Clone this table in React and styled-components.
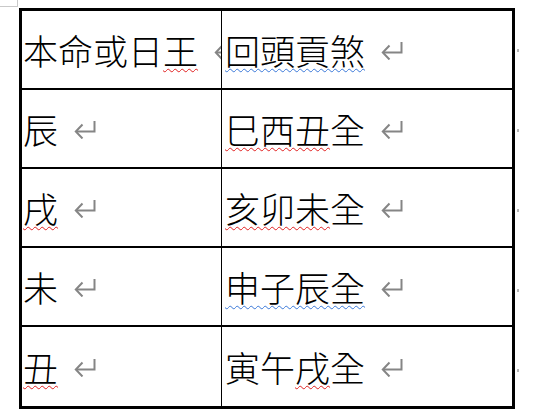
import styled, { createGlobalStyle } from 'styled-components';

const GlobalStyle = createGlobalStyle`
  html, body {
    margin: 0;
    padding: 0;
    background: #ffffff;
  }
  body {
    font-family: "Noto Sans CJK TC", "Noto Sans CJK SC", sans-serif;
  }
`

const rows = [
  { left: [['本命或日'], ['王', 'red']], right: [['回頭貢煞', 'blue']] },
  { left: [['辰']], right: [['巳西丑', 'red'], ['全']] },
  { left: [['戌', 'red']], right: [['亥卯未', 'red'], ['全']] },
  { left: [['未']], right: [['申子辰全', 'blue']] },
  { left: [['丑', 'red']], right: [['寅午'], ['戌', 'red'], ['全']] },
];

const ReturnMark = () => (
  <ArrowBox viewBox="0 0 22 19" width="22" height="19">
    <polyline points="20.5,1 20.5,11.5 2,11.5" fill="none" stroke="#858585" strokeWidth="2" />
    <polyline points="8.5,4.5 1.8,11.5 8.5,18.5" fill="none" stroke="#858585" strokeWidth="2" />
  </ArrowBox>
)

const Cell = ({ parts, side }) => (
  <CellBox $side={side}>
    <Text>
      {parts.map(([txt, tone], i) =>
        tone ? <Squiggle key={i} $tone={tone}>{txt}</Squiggle> : <span key={i}>{txt}</span>
      )}
    </Text>
    <ReturnMark />
  </CellBox>
)

const App = () => {
  return (
    <>
      <GlobalStyle />
      <Page>
        <CropMark />
        <TableRow>
          <Grid>
            {rows.map((row, i) => (
              <Row key={i} $last={i === rows.length - 1}>
                <Cell parts={row.left} side="left" />
                <Cell parts={row.right} side="right" />
              </Row>
            ))}
          </Grid>
          <RowMarks>
            {rows.map((_, i) => <RowEnd key={i} />)}
          </RowMarks>
        </TableRow>
      </Page>
    </>
  )
}

export default App;

const Page = styled.div`
  position: relative;
  width: 535px;
  height: 419px;
  padding: 8px 0 0 19px;
  box-sizing: border-box;
  overflow: hidden;
`

const CropMark = styled.div`
  position: absolute;
  left: 0;
  top: 0;
  width: 17px;
  height: 6px;
  border-right: 1px solid #c9c9c9;
  border-bottom: 1px solid #c9c9c9;
`

const TableRow = styled.div`
  display: flex;
`

const Grid = styled.div`
  width: 496px;
  height: 401px;
  box-sizing: border-box;
  border: 3px solid #000;
  display: grid;
  grid-template-rows: repeat(5, 1fr);
`

const Row = styled.div`
  display: grid;
  grid-template-columns: 200px 1fr;
  border-bottom: ${p => (p.$last ? 'none' : '2px solid #000')};
`

const CellBox = styled.div`
  display: flex;
  align-items: center;
  gap: 16px;
  overflow: hidden;
  white-space: nowrap;
  padding-left: ${p => (p.$side === 'left' ? '1px' : '3px')};
  border-right: ${p => (p.$side === 'left' ? '1px solid #000' : 'none')};
`

const Text = styled.span`
  font-size: 35px;
  font-weight: 300;
  color: #000;
  line-height: 1;
  flex-shrink: 0;
`

const Squiggle = styled.span`
  text-decoration-line: underline;
  text-decoration-style: wavy;
  text-decoration-color: ${p => (p.$tone === 'red' ? '#e02020' : '#3a78d8')};
  text-decoration-thickness: 1.4px;
  text-underline-offset: 3px;
`

const ArrowBox = styled.svg`
  flex-shrink: 0;
  margin-top: 2px;
`

const RowMarks = styled.div`
  display: grid;
  grid-template-rows: repeat(5, 1fr);
  height: 401px;
  padding-left: 2px;
`

const RowEnd = styled.div`
  align-self: center;
  width: 2px;
  height: 3px;
  margin-top: 4px;
  background: #b5b5b5;
`
